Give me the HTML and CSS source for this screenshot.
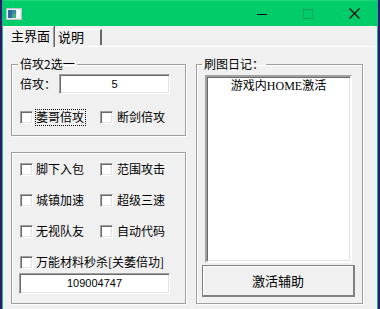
FILE: index.html
```html
<!DOCTYPE html>
<html lang="zh">
<head>
  <meta charset="UTF-8" />
  <title>辅助</title>
  <link rel="stylesheet" href="styles.css">
</head>
<body>
  <div class="window">
    <div class="titlebar">
      <svg class="app-icon" width="16" height="12" viewBox="0 0 16 12">
        <rect x="0.5" y="0.5" width="15" height="11" fill="#e8eef0" stroke="#b8c4cc"/>
        <rect x="2" y="2" width="8" height="8" fill="#3c8a9c"/>
        <rect x="2" y="2" width="4" height="8" fill="#2a6ea0"/>
        <rect x="6" y="6" width="4" height="4" fill="#4caa7c"/>
        <rect x="11" y="2" width="3" height="8" fill="#f8fbfc"/>
      </svg>
      <div class="controls">
        <div class="ctl"><svg width="10" height="10" viewBox="0 0 10 10"><path d="M0 5.5H10" stroke="#000" stroke-width="1"/></svg></div>
        <div class="ctl"><svg width="10" height="10" viewBox="0 0 10 10"><rect x="0.5" y="0.5" width="9" height="9" fill="none" stroke="#12a05c"/></svg></div>
        <div class="ctl"><svg width="11" height="11" viewBox="0 0 11 11"><path d="M0.5 0.5L10.5 10.5M10.5 0.5L0.5 10.5" stroke="#000" stroke-width="1.1"/></svg></div>
      </div>
    </div>

    <div class="tabs">
      <div class="tab active">主界面</div>
      <div class="tab">说明</div>
    </div>

    <div class="panel">
      <div class="col-left">
        <fieldset class="group g1">
          <legend>倍攻2选一</legend>
          <div class="row-edit">
            <span class="lbl">倍攻：</span>
            <div class="edit">5</div>
          </div>
          <div class="checks first">
            <span class="chk"><i class="box"></i><span class="focus">萎哥倍攻</span></span>
            <span class="chk col2"><i class="box"></i><span>断剑倍攻</span></span>
          </div>
        </fieldset>

        <fieldset class="group g2">
          <div class="checks">
            <span class="chk"><i class="box"></i><span>脚下入包</span></span>
            <span class="chk col2"><i class="box"></i><span>范围攻击</span></span>
          </div>
          <div class="checks">
            <span class="chk"><i class="box"></i><span>城镇加速</span></span>
            <span class="chk col2"><i class="box"></i><span>超级三速</span></span>
          </div>
          <div class="checks">
            <span class="chk"><i class="box"></i><span>无视队友</span></span>
            <span class="chk col2"><i class="box"></i><span>自动代码</span></span>
          </div>
          <div class="checks">
            <span class="chk"><i class="box"></i><span>万能材料秒杀[关萎倍功]</span></span>
          </div>
          <div class="edit wide">109004747</div>
        </fieldset>
      </div>

      <fieldset class="group g3">
        <legend>刷图日记：</legend>
        <div class="list">
          <div class="item">游戏内HOME激活</div>
        </div>
        <div class="btn">激活辅助</div>
      </fieldset>
    </div>
  </div>
</body>
</html>
```

FILE: styles.css
```css
body {
  margin: 0;
  background-color: #2a1c68;
  font-family: "Noto Sans CJK SC", "Noto Sans", sans-serif;
  font-size: 12px;
  color: #000;
}
.window {
  margin-left: 2px;
  width: 374px;
  height: 320px;
  border-left: 1px solid #1db884;
  border-right: 1px solid #1db884;
  background-color: #f0f0f0;
  overflow: hidden;
}
.titlebar {
  height: 26px;
  background-color: #00cc6a;
  display: flex;
  align-items: center;
  box-sizing: border-box;
  border-top: 1px solid #22d47c;
}
.app-icon {
  margin-left: 3px;
}
.controls {
  margin-left: auto;
  display: flex;
  height: 100%;
}
.ctl {
  width: 46px;
  display: flex;
  align-items: center;
  justify-content: center;
}
.tabs {
  height: 20px;
  display: flex;
  align-items: flex-end;
  padding-left: 1px;
  position: relative;
  z-index: 1;
}
.tab {
  box-sizing: border-box;
  height: 16px;
  line-height: 14px;
  width: 47px;
  padding-left: 3px;
  border-top: 1px solid #fff;
  border-right: 2px solid #696969;
  margin-bottom: 1px;
  font-size: 13px;
  white-space: nowrap;
}
.tab.active {
  height: 21px;
  width: 50px;
  line-height: 17px;
  padding-left: 6px;
  border-left: 1px solid #fff;
  border-right: 1px solid #a0a0a0;
  box-shadow: 1px 0 0 #696969;
  background-color: #f0f0f0;
  margin-bottom: -1px;
  margin-right: 1px;
}
.panel {
  border-top: 1px solid #fff;
  display: flex;
  gap: 10px;
  padding-left: 8px;
}
.col-left {
  display: flex;
  flex-direction: column;
}
.group {
  margin: 0;
  min-inline-size: 0;
  border: 1px solid #a0a0a0;
  box-shadow: inset 1px 1px 0 #fff, 1px 1px 0 #fff;
  box-sizing: border-box;
}
.group legend {
  padding: 0 2px;
  line-height: 14px;
  font-size: 12px;
}
.g1 {
  width: 175px;
  margin-top: 10px;
  padding: 0 14px 11px 8px;
}
.g1 legend {
  margin-left: -2px;
}
.row-edit {
  display: flex;
  align-items: center;
  margin-top: 3px;
}
.lbl {
  width: 39px;
  line-height: 14px;
}
.edit {
  box-sizing: border-box;
  width: 111px;
  height: 20px;
  background-color: #fff;
  border: 1px solid;
  border-color: #a0a0a0 #fff #fff #a0a0a0;
  box-shadow: inset 1px 1px 0 #696969, inset -1px -1px 0 #e3e3e3;
  text-align: center;
  font-family: "Liberation Sans", sans-serif;
  font-size: 11px;
  line-height: 18px;
}
.edit.wide {
  width: 151px;
  height: 21px;
  margin-left: -1px;
  line-height: 19px;
}
.checks {
  display: flex;
  height: 14px;
  line-height: 14px;
}
.g1 .checks {
  margin-top: 16px;
}
.chk {
  flex: none;
  display: flex;
  align-items: center;
  width: 80px;
  white-space: nowrap;
}
.chk .box {
  flex: none;
  box-sizing: border-box;
  width: 13px;
  height: 13px;
  margin-right: 3px;
  background-color: #fff;
  border: 1px solid;
  border-color: #a0a0a0 #fff #fff #a0a0a0;
  box-shadow: inset 1px 1px 0 #696969, inset -1px -1px 0 #e3e3e3;
}
.chk.col2 .box {
  margin-right: 4px;
}
.focus {
  outline: 1px dotted #000;
  padding: 0 1px 1px 0;
}
.g2 {
  width: 175px;
  margin-top: 16px;
  padding: 9px 14px 9px 8px;
  display: flex;
  flex-direction: column;
  gap: 17px;
}
.g2 .edit.wide {
  margin-top: -13px;
}
.g3 {
  width: 167px;
  margin-top: 10px;
  padding: 0 6px 6px 5px;
}
.g3 legend {
  margin-left: 0;
}
.list {
  box-sizing: border-box;
  margin-top: 4px;
  margin-left: 3px;
  width: 147px;
  height: 188px;
  background-color: #fff;
  border: 2px solid;
  border-color: #a0a0a0 #fff #fff #a0a0a0;
  box-shadow: inset 1px 1px 0 #696969, inset -1px -1px 0 #e3e3e3;
}
.item {
  text-align: center;
  line-height: 14px;
  padding-top: 2px;
  font-family: "Liberation Serif", "Noto Sans CJK SC", serif;
}
.btn {
  box-sizing: border-box;
  margin-top: 2px;
  width: 153px;
  height: 32px;
  border: 1px solid #808080;
  border-right-width: 2px;
  border-bottom-width: 2px;
  box-shadow: inset 1px 1px 0 #fff;
  text-align: center;
  line-height: 29px;
  font-size: 13px;
}
```
